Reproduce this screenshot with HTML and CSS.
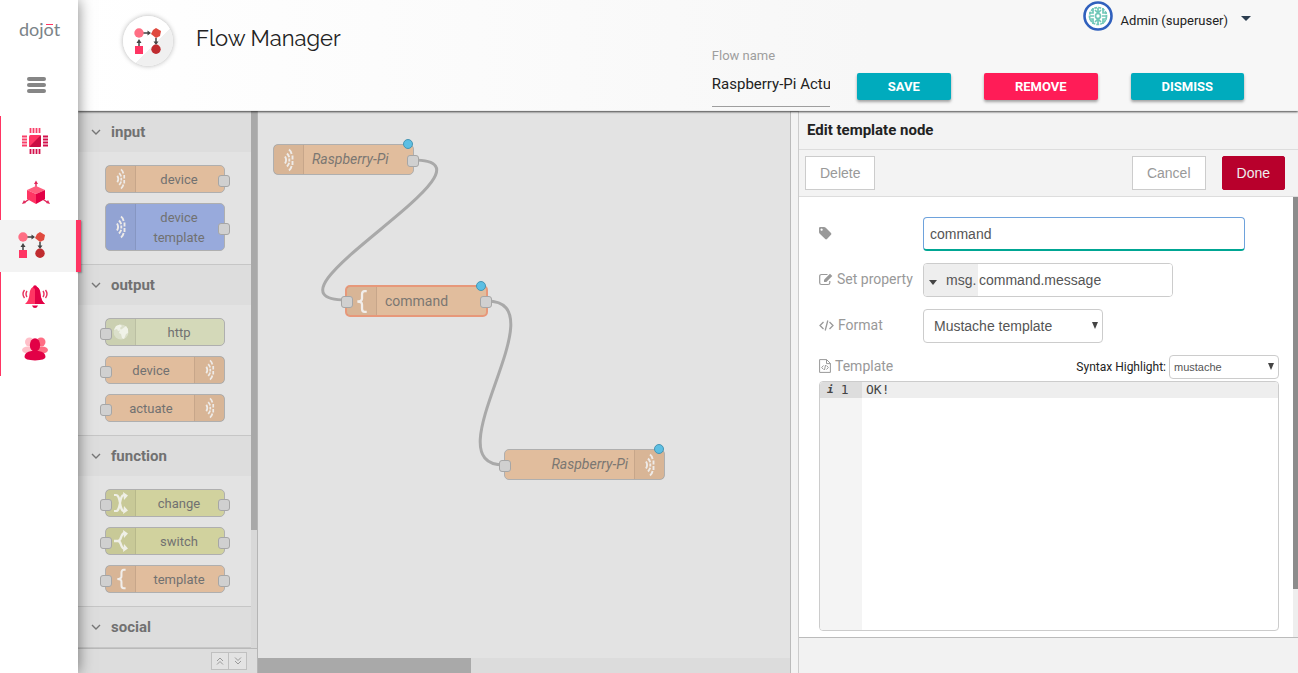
FILE: index.html
```html
<!DOCTYPE html>
<html lang="en">
<head>
<meta charset="utf-8">
<title>Flow Manager</title>
<link rel="stylesheet" href="styles.css">
</head>
<body>
<svg class="defs" aria-hidden="true">
  <symbol id="i-flow" viewBox="0 0 28 26">
    <path d="M9 5h6M5 19v-5M22 10v4" stroke="#444" stroke-width="1.500" fill="none"/>
    <path d="M13.500 2.500 17 5l-3.500 2.500zM2.500 15 5 11l2.500 4zM19.500 13.500h5L22 17z" fill="#444"/>
    <circle cx="5" cy="5" r="4.700" fill="#ff6e84"/>
    <path d="M22 0l5 3-1 5-4 2-5-4 2-4z" fill="#e04a3f"/>
    <path d="M1 18h8v8H1z" fill="#ff3563"/>
    <circle cx="22" cy="21.300" r="4.700" fill="#c02c30"/>
  </symbol>
  <symbol id="i-signal" viewBox="0 0 12 24">
    <g fill="none" stroke="#eeebe8" stroke-width="1.900">
      <path d="M2 8.500q2.200 3.500 0 7"/>
      <path d="M4 5.500q1.500 1.500 2.200 3.700M6.300 10.500v3M6.200 14.800q-.7 2.200-2.200 3.700"/>
      <path d="M6 1.500q2 1.500 2.600 4.500M9.500 7.500v4M9.500 13v4M8.600 18q-.6 3-2.600 4.500"/>
    </g>
  </symbol>
  <symbol id="i-brace" viewBox="0 0 12 24">
    <path d="M11 2H9Q6.500 2 6.500 5v4q0 3-4.500 3 4.500 0 4.500 3v4q0 3 2.500 3h2" fill="none" stroke="#f1eeeb" stroke-width="2.200"/>
  </symbol>
  <symbol id="i-change" viewBox="0 0 16 22">
    <path d="M1 3h2c5 0 3 16 8 16M1 19h2C8 19 6 3 11 3" fill="none" stroke="#efefe6" stroke-width="2.200"/>
    <path d="M10 0l5 3.500L11 8zM10 22l5-3.500L11 14z" fill="#efefe6"/>
  </symbol>
  <symbol id="i-switch" viewBox="0 0 16 22">
    <path d="M1 11h4C9 11 7 3 12 3M5 11c4 0 2 8 7 8" fill="none" stroke="#efefe6" stroke-width="2.300"/>
    <path d="M10 0l5 3.500L11 8zM10 22l5-3.500L11 14z" fill="#efefe6"/>
  </symbol>
  <symbol id="i-globe" viewBox="0 0 16 16">
    <circle cx="8" cy="8" r="7.500" fill="#dbdfca"/>
    <path d="M3 2l4-1.500L9 2 7 4l1 2-3 1-1-2-3 1zM9 5l4-3 2 3v4l-2 1-2 5-2-1-1-4-2-1 1-3z" fill="#f0f2e8"/>
  </symbol>
  <symbol id="i-chevron" viewBox="0 0 10 6">
    <path d="M1 1l4 4 4-4" fill="none" stroke="#777" stroke-width="1.400"/>
  </symbol>
</svg>

<div class="app">
  <aside class="sidebar">
    <div class="logo">dojot<span class="logo-bar"></span></div>
    <button class="menu-toggle" aria-label="Toggle menu"><span></span><span></span><span></span></button>
    <nav class="nav">
      <a href="#devices" class="nav-item" aria-label="Devices">
        <svg width="26" height="26" viewBox="0 0 26 26">
          <path d="M8.500 0v5M11.500 0v5M14.500 0v5M17.500 0v5" stroke="#f9406a" stroke-width="1.800"/>
          <path d="M8.500 21v5M11.500 21v5M14.500 21v5M17.500 21v5" stroke="#d3124d" stroke-width="1.800"/>
          <path d="M0 8.500h5M0 11.500h5M0 14.500h5M0 17.500h5" stroke="#f9406a" stroke-width="1.800"/>
          <path d="M21 8.500h5M21 11.500h5M21 14.500h5M21 17.500h5" stroke="#d3124d" stroke-width="1.800"/>
          <rect x="7" y="7" width="12" height="12" rx="1.500" fill="#ff3563"/>
          <path d="M19 7v10.500q0 1.500-1.500 1.500H7z" fill="#c90d42"/>
        </svg>
      </a>
      <a href="#templates" class="nav-item nav-item-wide" aria-label="Templates">
        <svg width="28" height="26" viewBox="0 0 28 26">
          <path d="M14 8V2M9 18l-6 4M19 18l6 4" stroke="#e0265a" stroke-width="1.400"/>
          <path d="M12 4l2-3.500L16 4zM0 24l2-4 2 3zM28 24l-2-4-2 3z" fill="#e0265a"/>
          <path d="M14 6l9 4-9 4-9-4z" fill="#ff5f7e"/>
          <path d="M5 10l9 4v10l-9-5z" fill="#ff3563"/>
          <path d="M23 10l-9 4v10l9-5z" fill="#e20046"/>
        </svg>
      </a>
      <a href="#flows" class="nav-item nav-item-active" aria-label="Flows">
        <svg width="28" height="26"><use href="#i-flow"/></svg>
      </a>
      <a href="#alarms" class="nav-item" aria-label="Notifications">
        <svg width="26" height="24" viewBox="0 0 26 24">
          <path d="M13 1q5 1 5.500 8 .5 7 4.500 10H3q4-3 4.500-10Q8 2 13 1" fill="#ff3563"/>
          <path d="M13 1q5 1 5.500 8 .5 7 4.500 10H13z" fill="#e20046"/>
          <circle cx="13" cy="2" r="1.800" fill="#e20046"/>
          <path d="M10 20.500h6q-1 2.500-3 2.500t-3-2.500" fill="#e20046"/>
          <path d="M5 6q-2 3 0 6M2.500 5q-3 4 0 8M21 6q2 3 0 6M23.500 5q3 4 0 8" fill="none" stroke="#e8335f" stroke-width="1.400"/>
        </svg>
      </a>
      <a href="#users" class="nav-item" aria-label="Users">
        <svg width="26" height="24" viewBox="0 0 26 24">
          <circle cx="7.500" cy="5" r="4.500" fill="#ffc0c9"/><ellipse cx="6" cy="13" rx="6" ry="3.500" fill="#ffc0c9"/>
          <circle cx="19" cy="5" r="4.500" fill="#ff6e84"/><ellipse cx="20" cy="13" rx="6" ry="3.500" fill="#ff6e84"/>
          <path d="M2.500 20q0-5 7-6h7q7 1 7 6 0 3-10.500 3.500Q2.500 23 2.500 20" fill="#e20046"/>
          <ellipse cx="13" cy="8" rx="5.200" ry="6.800" fill="#e20046"/>
        </svg>
      </a>
    </nav>
  </aside>

  <div class="page">
    <header class="header">
      <div class="brand">
        <span class="brand-icon"><svg width="28" height="26"><use href="#i-flow"/></svg></span>
        <h1>Flow Manager</h1>
      </div>
      <div class="header-side">
        <button class="user">
          <svg class="avatar" width="30" height="30" viewBox="0 0 30 30">
            <circle cx="15" cy="15" r="13.500" fill="#fff" stroke="#3060bd" stroke-width="2.600"/>
            <g fill="none" stroke="#70c7b8" stroke-width="1.700">
              <circle cx="15" cy="15" r="8.500" stroke-dasharray="3 1"/>
              <circle cx="15" cy="15" r="2.500"/>
              <path d="M10 7v5H6M20 7v5h4M10 23v-5H6M20 23v-5h4M15 7v4M15 19v4M7 15h4M19 15h4M12 9l3 3 3-3M12 21l3-3 3 3"/>
            </g>
          </svg>
          <span>Admin (superuser)</span>
          <span class="caret"></span>
        </button>
        <form class="flow-form">
          <div class="flow-name">
            <label for="flow-name">Flow name</label>
            <input id="flow-name" type="text" value="Raspberry-Pi Actuator">
          </div>
          <button type="button" class="btn">Save</button>
          <button type="button" class="btn btn-danger">Remove</button>
          <button type="button" class="btn">Dismiss</button>
        </form>
      </div>
    </header>

    <main class="editor">
      <section class="palette">
        <div class="palette-body">
          <div class="palette-list">
            <div class="category">
              <button class="category-head"><svg width="10" height="6"><use href="#i-chevron"/></svg>input</button>
              <div class="category-items">
                <div class="node orange out"><span class="node-icon"><svg width="12" height="22"><use href="#i-signal"/></svg></span><span class="node-label">device</span></div>
                <div class="node blue out"><span class="node-icon"><svg width="12" height="24"><use href="#i-signal"/></svg></span><span class="node-label">device template</span></div>
              </div>
            </div>
            <div class="category">
              <button class="category-head"><svg width="10" height="6"><use href="#i-chevron"/></svg>output</button>
              <div class="category-items">
                <div class="node green in"><span class="node-icon"><svg width="16" height="16"><use href="#i-globe"/></svg></span><span class="node-label">http</span></div>
                <div class="node orange in reverse"><span class="node-icon"><svg width="12" height="22"><use href="#i-signal"/></svg></span><span class="node-label">device</span></div>
                <div class="node orange in reverse"><span class="node-icon"><svg width="12" height="22"><use href="#i-signal"/></svg></span><span class="node-label">actuate</span></div>
              </div>
            </div>
            <div class="category">
              <button class="category-head"><svg width="10" height="6"><use href="#i-chevron"/></svg>function</button>
              <div class="category-items">
                <div class="node olive in out"><span class="node-icon"><svg width="16" height="22"><use href="#i-change"/></svg></span><span class="node-label">change</span></div>
                <div class="node olive in out"><span class="node-icon"><svg width="16" height="22"><use href="#i-switch"/></svg></span><span class="node-label">switch</span></div>
                <div class="node orange in out"><span class="node-icon"><svg width="12" height="22"><use href="#i-brace"/></svg></span><span class="node-label">template</span></div>
              </div>
            </div>
            <div class="category">
              <button class="category-head"><svg width="10" height="6"><use href="#i-chevron"/></svg>social</button>
            </div>
          </div>
          <div class="palette-scroll"><div class="palette-thumb"></div></div>
        </div>
        <div class="palette-foot">
          <button aria-label="Collapse all"><svg width="8" height="8" viewBox="0 0 8 8"><path d="M1 4l3-3 3 3M1 7.500l3-3 3 3"/></svg></button>
          <button aria-label="Expand all"><svg width="8" height="8" viewBox="0 0 8 8"><path d="M1 .5l3 3 3-3M1 4l3 3 3-3"/></svg></button>
        </div>
      </section>

      <section class="workspace">
        <div class="canvas">
          <svg class="wires">
            <path d="M155 49C258 49-14 189 88 189"/>
            <path d="M229 190C304 190 171 354 246 354"/>
          </svg>
          <div class="node flow-node orange out node-a"><span class="node-icon"><svg width="12" height="24"><use href="#i-signal"/></svg></span><span class="node-label">Raspberry-Pi</span><span class="changed"></span></div>
          <div class="node flow-node orange in out selected node-b"><span class="node-icon"><svg width="13" height="25"><use href="#i-brace"/></svg></span><span class="node-label">command</span><span class="changed"></span></div>
          <div class="node flow-node orange in reverse node-c"><span class="node-icon"><svg width="12" height="24"><use href="#i-signal"/></svg></span><span class="node-label">Raspberry-Pi</span><span class="changed"></span></div>
        </div>
        <div class="canvas-scroll"><div class="canvas-thumb"></div></div>
      </section>

      <div class="separator"></div>

      <section class="panel">
        <h2>Edit template node</h2>
        <div class="panel-tools">
          <button class="plain">Delete</button>
          <div class="panel-actions">
            <button class="plain">Cancel</button>
            <button class="plain done">Done</button>
          </div>
        </div>
        <div class="panel-main">
          <form class="fields">
            <div class="field">
              <label for="node-name" aria-label="Name"><svg width="13" height="13" viewBox="0 0 13 13"><path fill-rule="evenodd" d="M0 1.200Q0 0 1.200 0H5q1 0 1.800.8l5.200 5.200q.9.900 0 1.800L8 12q-.9.800-1.800 0L.8 6.800Q0 6 0 5zM2.600 1.500a1.100 1.100 0 1 0 .01 0" fill="#999"/></svg></label>
              <input id="node-name" class="control name" type="text" value="command">
            </div>
            <div class="field">
              <label for="node-prop"><svg width="14" height="13" viewBox="0 0 14 13"><path d="M8.500 1.500H2.500Q.7 1.500.7 3.300v6.400q0 1.800 1.800 1.800H9q1.800 0 1.800-1.800V8" fill="none" stroke="#999" stroke-width="1.200"/><path d="M5 9V6.700L11 .7l2.300 2.300-6 6z" fill="#999"/></svg>Set property</label>
              <div class="control typed">
                <button type="button" class="type"><span class="caret"></span>msg.</button>
                <input id="node-prop" type="text" value="command.message">
              </div>
            </div>
            <div class="field">
              <label for="node-format"><svg width="15" height="11" viewBox="0 0 15 11"><path d="M4.500 2L1 5.500 4.500 9M10.500 2L14 5.500 10.500 9M8.800.5l-2.600 10" fill="none" stroke="#999" stroke-width="1.300"/></svg>Format</label>
              <div class="select format"><select id="node-format" class="control"><option>Mustache template</option></select></div>
            </div>
            <div class="template-head">
              <label for="code"><svg width="12" height="14" viewBox="0 0 12 14"><path d="M.6.6h7L11.400 4.400v9H.6zM7.500.6v4h4M4.500 6.500L2.700 8.500l1.800 2M7.500 6.500l1.800 2-1.800 2M6.500 6l-1 5" fill="none" stroke="#999"/></svg>Template</label>
              <div class="syntax">
                <label for="syntax">Syntax Highlight:</label>
                <div class="select"><select id="syntax" class="control"><option>mustache</option></select></div>
              </div>
            </div>
            <div class="code-box">
              <div class="gutter"><div class="line-no"><i>i</i><span>1</span></div></div>
              <textarea id="code" spellcheck="false">OK!</textarea>
            </div>
          </form>
          <div class="panel-scroll"><div class="panel-thumb"></div></div>
        </div>
        <div class="panel-foot"></div>
      </section>
    </main>
  </div>
</div>
</body>
</html>
```

FILE: styles.css
```css
* { box-sizing: border-box; }
body { margin: 0; font-family: Roboto, "Liberation Sans", sans-serif; font-size: 14px; color: #222; }
button, input, select, textarea { font: inherit; color: inherit; margin: 0; outline: none; }
button { cursor: pointer; border: 0; background: none; padding: 0; }
svg { display: block; flex: none; }
.defs { position: absolute; width: 0; height: 0; }

.app { display: flex; height: 100vh; overflow: hidden; }

/* Sidebar */
.sidebar { width: 78px; flex: none; background: #fff; position: relative; z-index: 3; box-shadow: 0 0 14px rgba(0, 0, 0, .5); }
.logo { position: relative; width: 40px; margin: 16px 0 0 19px; font: 400 18px/26px Lato, sans-serif; color: #7b8388; }
.logo-bar { position: absolute; left: 27px; top: 8px; width: 7px; height: 1px; background: #ff3563; }
.menu-toggle { display: flex; flex-direction: column; gap: 2px; width: 19px; margin: 35px 0 0 27px; }
.menu-toggle span { height: 4px; border-radius: 2px; background: #868686; }
.nav { margin-top: 23px; }
.nav-item { display: flex; align-items: center; justify-content: center; height: 52px; padding: 0 10px 2px 0; border-left: 1px solid #ff3563; }
.nav-item-wide { padding-right: 8px; }
.nav-item-active { position: relative; padding-right: 15px; border-left-color: #f3f3f3; background: #f3f3f3; }
.nav-item-active::after { content: ""; position: absolute; right: -3px; top: 0; bottom: 0; width: 5px; background: #ff3563; box-shadow: 1px 1px 2px rgba(0, 0, 0, .3); }

/* Header */
.page { flex: 1; min-width: 0; display: flex; flex-direction: column; }
.header { display: flex; justify-content: space-between; min-height: 111px; background: linear-gradient(90deg, #fff, #f7f7f7 65%); border-bottom: 1px solid #eee; box-shadow: 0 1px 2px rgba(0, 0, 0, .7); position: relative; z-index: 2; }
.brand { display: flex; gap: 23px; padding: 16px 0 0 45px; }
.brand-icon { display: flex; align-items: center; justify-content: center; width: 50px; height: 50px; border-radius: 50%; background: linear-gradient(135deg, #fff 60%, #f0f0f0 60%); box-shadow: 0 0 5px rgba(0, 0, 0, .3); }
.brand h1 { margin: 8px 0 0; font: 400 22px/28px Raleway, Lato, sans-serif; color: #222; }
.header-side { display: flex; flex-direction: column; align-items: flex-end; gap: 17px; padding-top: 1px; }
.user { display: flex; align-items: center; gap: 8px; margin-right: 47px; font-size: 13px; line-height: 16px; }
.user > span { margin-top: 9px; }
.user .caret { margin: 4px 0 0 5px; }
.caret { border: 5px solid transparent; border-top: 5px solid #2c3e50; border-bottom: 0; }
.flow-form { display: flex; gap: 33px; margin-right: 54px; }
.flow-name { width: 118px; margin-right: -6px; }
.flow-name label { display: block; font-size: 13px; line-height: 16px; color: #9e9e9e; }
.flow-name input { display: block; width: 100%; height: 43px; padding: 0 0 2px; border: 0; border-bottom: 1px solid #9e9e9e; background: none; font-size: 15px; }
.btn { height: 27px; margin-top: 25px; padding: 0 31px; border-radius: 2px; background: #00abbd; color: #fff; font-size: 13px; font-weight: 700; text-transform: uppercase; box-shadow: 0 2px 3px rgba(0, 0, 0, .35); }
.btn-danger { background: #ff1c57; }

/* Nodes */
.editor { flex: 1; min-height: 0; display: flex; }
.node { position: relative; display: flex; width: 120px; min-height: 28px; border: 1px solid #afafaf; border-radius: 5px; color: #717171; font-size: 13px; line-height: 20px; }
.node.reverse { flex-direction: row-reverse; }
.node-icon { display: flex; flex: none; align-items: center; justify-content: center; width: 30px; background: rgba(0, 0, 0, .04); border-right: 1px solid rgba(0, 0, 0, .08); }
.reverse .node-icon { border-right: 0; border-left: 1px solid rgba(0, 0, 0, .08); }
.node-label { flex: 1; align-self: center; text-align: center; padding: 4px 3px 2px 1px; }
.reverse .node-label { padding: 4px 1px 2px 3px; }
.orange { background: #e1bd9d; }
.blue { background: #98aadc; }
.green { background: #d4d9b9; }
.olive { background: #d1d29e; }
.in::before, .out::after { content: ""; position: absolute; top: 50%; width: 10px; height: 10px; margin-top: -4px; border: 1px solid #a6a6a6; border-radius: 3px; background: #d0d0d0; }
.in::before { left: -6px; }
.out::after { right: -6px; }

/* Palette */
.palette { width: 180px; flex: none; display: flex; flex-direction: column; background: #e3e3e3; border-right: 1px solid #b5b5b5; }
.palette-body { flex: 1; min-height: 0; display: flex; }
.palette-list { flex: 1; overflow: hidden; }
.category { border-bottom: 1px solid #c6c6c6; }
.category-head { display: flex; align-items: center; gap: 10px; width: 100%; height: 41px; padding-left: 13px; background: #ddd; font-size: 15px; font-weight: 700; color: #717171; }
.category-items { display: flex; flex-direction: column; gap: 10px; padding: 13px 0 13px 27px; }
.category + .category .category-head { height: 40px; }
.palette-scroll { width: 6px; background: #d8d8d8; }
.palette-thumb { height: 78%; background: #a9a9a9; }
.palette-foot { display: flex; justify-content: flex-end; height: 25px; padding: 3px 10px 0 0; border-top: 1px solid #b9b9b9; background: #ddd; }
.palette-foot button { display: flex; align-items: center; justify-content: center; width: 18px; height: 18px; border: 1px solid #c0c0c0; background: #e3e3e3; }
.palette-foot button + button { border-left: 0; }
.palette-foot path { fill: none; stroke: #999; }

/* Canvas */
.workspace { flex: 1; min-width: 0; display: flex; flex-direction: column; background: #e3e3e3; }
.canvas { position: relative; flex: 1; overflow: hidden; }
.wires { position: absolute; width: 100%; height: 100%; fill: none; stroke: #a9a9a9; stroke-width: 3; }
.flow-node { position: absolute; width: 141px; height: 31px; font-size: 14px; color: #7b7772; }
.flow-node .node-label { font-style: italic; text-align: left; padding: 2px 8px 3px; }
.flow-node.reverse .node-label { text-align: right; padding: 2px 6px 3px; }
.flow-node.selected .node-label { font-style: normal; }
.flow-node::before, .flow-node::after { margin-top: -5px; }
.node-a { left: 15px; top: 33px; }
.node-b { left: 87px; top: 174px; width: 143px; height: 32px; }
.node-c { left: 246px; top: 338px; width: 161px; }
.selected { border: 2px solid #e7987a; }
.changed { position: absolute; right: 0; top: -6px; width: 10px; height: 10px; border: 1px solid #4795b3; border-radius: 50%; background: #5dbfe3; }
.canvas-scroll { height: 15px; background: #dcdcdc; }
.canvas-thumb { width: 40%; height: 100%; background: #a9a9a9; }
.separator { width: 9px; flex: none; background: #f3f3f3; border: 1px solid #ccc; border-left-color: #bbb; border-bottom: 0; }

/* Edit panel */
.panel { width: 499px; flex: none; display: flex; flex-direction: column; background: #f3f3f3; }
.panel h2 { margin: 0; padding: 9px 8px; font-size: 15px; line-height: 20px; border-bottom: 1px solid #ddd; }
.panel-tools { display: flex; justify-content: space-between; padding: 6px 13px 6px 6px; border-bottom: 1px solid #ddd; }
.panel-actions { display: flex; gap: 16px; }
.plain { height: 34px; padding: 0 14px; border: 1px solid #ccc; background: #fff; color: #999; font: 14px "Liberation Sans", Arial, sans-serif; }
.done { border-color: #b8002c; border-radius: 2px; background: #b8002c; color: #eee; }
.panel-main { flex: 1; min-height: 0; display: flex; background: #fff; }
.fields { flex: 1; min-width: 0; display: flex; flex-direction: column; gap: 12px; padding: 20px 14px 6px 20px; }
.field { display: flex; align-items: center; }
.field > label { width: 104px; padding-bottom: 2px; }
.field > label, .template-head > label { display: flex; align-items: center; gap: 4px; color: #999; white-space: nowrap; }
.template-head > label { padding-bottom: 2px; }
.control { height: 34px; border: 1px solid #ccc; border-radius: 4px; background: #fff; color: #555; font: 14px "Liberation Sans", Arial, sans-serif; }
.name { width: 322px; padding: 0 6px; border-color: #6ea2dc; border-bottom: 2px solid #00a693; }
.typed { display: flex; width: 250px; overflow: hidden; }
.type { display: flex; align-items: center; gap: 9px; width: 54px; padding-left: 5px; background: #eee; }
.type .caret { border-top-color: #444; border-left-width: 4px; border-right-width: 4px; margin-top: 4px; }
.typed input { flex: 1; min-width: 0; border: 0; padding: 0 1px; }
.select { position: relative; }
.select::after { content: ""; position: absolute; right: 5px; top: 50%; margin-top: -4px; border: 3px solid transparent; border-top: 7px solid #444; border-bottom: 0; pointer-events: none; }
.select select { appearance: none; width: 100%; padding: 0 10px; }
.format { width: 180px; }
.template-head { display: flex; justify-content: space-between; align-items: center; }
.syntax { display: flex; align-items: center; gap: 3px; font-size: 12px; }
.syntax .select { width: 110px; }
.syntax select { height: 24px; padding: 0 4px; font-size: 11px; }
.code-box { flex: 1; display: flex; margin-top: -10px; border: 1px solid #ccc; border-radius: 4px; overflow: hidden; font: 13px/16px "DejaVu Sans Mono", monospace; color: #444; }
.gutter { width: 42px; background: #f4f4f4; }
.line-no { display: flex; gap: 7px; padding-left: 7px; background: #ddd; }
.line-no i { font-size: 11px; font-weight: 700; }
.code-box textarea { flex: 1; border: 0; padding: 0 4px; resize: none; background: linear-gradient(#eee, #eee) 0 0 / 100% 16px no-repeat; }
.panel-scroll { width: 5px; background: #eee; }
.panel-thumb { height: 89%; background: #8c8c8c; }
.panel-foot { height: 36px; border-top: 1px solid #bbb; background: #f2f2f2; }
```
